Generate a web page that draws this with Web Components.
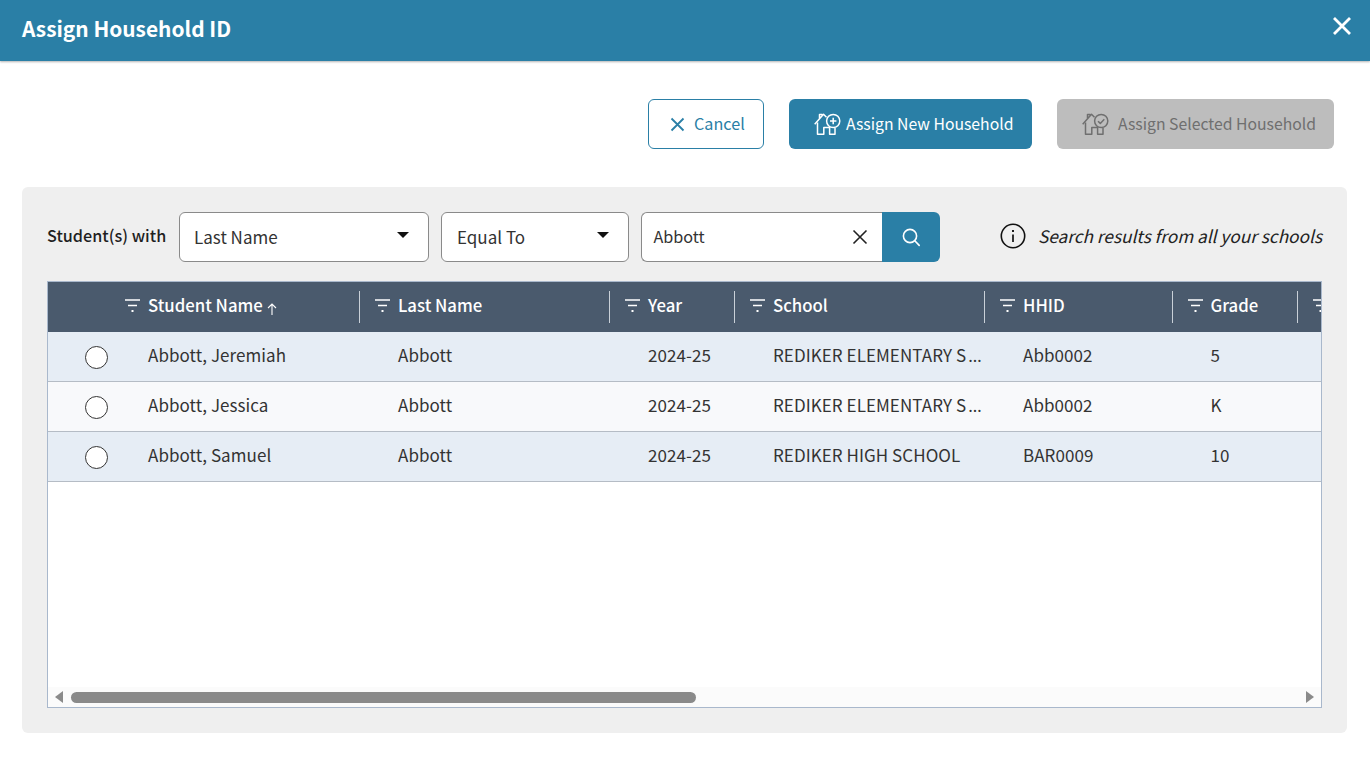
<!DOCTYPE html>
<html><head><meta charset="utf-8">
<style>
html,body{margin:0;height:100%;background:#fff;overflow:hidden}
body{font-family:"Noto Sans CJK SC","Noto Sans CJK JP",sans-serif;font-size:17px;color:#333}
</style></head>
<body>
<hh-dialog></hh-dialog>
<template id="t-dialog">
<style>
:host{display:flex;flex-direction:column;width:1370px;height:757px;box-sizing:border-box}
.actions{display:flex;justify-content:flex-end;gap:25px;padding:38px 36px 38px 0}
.panel{margin:0 23px 0 22px;height:546px;box-sizing:border-box;background:#efefef;border-radius:6px;padding:25px 25px 25px 25px;display:flex;flex-direction:column;gap:19px}
</style>
<hh-header>Assign Household ID</hh-header>
<div class="actions">
<hh-button kind="outline" width="116" icon="x">Cancel</hh-button>
<hh-button kind="primary" width="243" icon="add">Assign New Household</hh-button>
<hh-button kind="disabled" width="277" icon="check">Assign Selected Household</hh-button>
</div>
<div class="panel">
<hh-filter></hh-filter>
<hh-grid></hh-grid>
</div>
</template>

<template id="t-header">
<style>
:host{display:flex;align-items:center;justify-content:space-between;height:61px;flex:none;background:#2a7fa6;color:#fff;box-shadow:0 1px 2px rgba(0,0,0,.3);padding:0 18px 4px 22px;box-sizing:border-box}
h1{margin:0;font-size:20.9px;font-weight:700;line-height:28px;position:relative;top:-1px}
svg{display:block;position:relative;top:-3px}
</style>
<h1><slot></slot></h1>
<svg width="20" height="20" viewBox="0 0 20 20" fill="none" stroke="#fff" stroke-width="2.8"><path d="M2 2l16 16M18 2L2 18"/></svg>
</template>

<template id="t-button">
<style>
:host{display:flex;align-items:center;height:50px;box-sizing:border-box;border-radius:6px;font-size:15.75px;line-height:24px;flex:none;white-space:nowrap}
:host([kind=outline]){background:#fff;border:1px solid #2a7fa6;color:#2a7fa6;padding-left:21px;gap:9px;font-size:16.2px}
:host([kind=primary]){background:#2a7fa6;color:#fff;padding-left:25px;gap:4px}
:host([kind=disabled]){background:#bdbdbd;color:#6f6f6f;padding-left:25px;gap:8px}
svg{display:block;flex:none}
.t{position:relative;top:0}
:host([kind=outline]) .t{top:-1px}
</style>
<span id="ic" style="display:contents"></span><span class="t"><slot></slot></span>
</template>

<template id="t-filter">
<style>
:host{display:flex;align-items:center;height:50px;flex:none}
b{font-weight:500;font-size:16.2px;color:#1f1f1f;margin-right:12px;width:120px;white-space:nowrap;position:relative;top:-2px}
.sel,.search{height:50px;box-sizing:border-box;background:#fff;border:1px solid #8a8a8a;border-radius:6px;display:flex;align-items:center;font-size:17px;color:#333}
.sel span,.search span{position:relative;top:-1px}
.sel{padding:0 19px 0 14px;justify-content:space-between}
.s2{padding-left:15px}
.s1{width:250px;margin-right:12px}.s2{width:188px;margin-right:12px}
.tri{width:0;height:0;border:6px solid transparent;border-top:6px solid #111;border-bottom:0;position:relative;top:-2px}
.search{width:241px;border-radius:6px 0 0 6px;border-right:0;padding:0 14px 0 11.5px;justify-content:space-between;font-size:16.2px}
.go{width:58px;height:50px;background:#2a7fa6;border-radius:0 6px 6px 0;display:flex;align-items:center;justify-content:center}
.note{margin-left:auto;display:flex;align-items:center;gap:12px;font-style:italic;font-size:17.25px;color:#222}
.note span{position:relative;top:-2px}
svg{display:block}
.note svg{position:relative;top:-1px}
</style>
<b>Student(s) with</b>
<div class="sel s1"><span>Last Name</span><i class="tri"></i></div>
<div class="sel s2"><span>Equal To</span><i class="tri"></i></div>
<div class="search"><span>Abbott</span>
<svg width="16" height="16" viewBox="0 0 16 16" fill="none" stroke="#222" stroke-width="1.6"><path d="M1.5 1.5l13 13M14.5 1.5l-13 13"/></svg></div>
<div class="go"><svg width="20" height="20" viewBox="0 0 20 20" fill="none" stroke="#fff" stroke-width="1.6"><circle cx="9" cy="9" r="6.6"/><path d="M13.8 13.8l4.4 4.6" stroke-linecap="round"/></svg></div>
<div class="note">
<svg width="26" height="26" viewBox="0 0 26 26" fill="none" stroke="#111" stroke-width="1.6"><circle cx="13" cy="13" r="11.7"/><path d="M13 11.5v7.5" stroke-width="1.7"/><path d="M13 7v2" stroke-width="1.9"/></svg>
<span>Search results from all your schools</span></div>
</template>

<template id="t-grid">
<style>
:host{display:block;height:427px;box-sizing:border-box;border:1px solid #a9b8cc;background:#fff;position:relative;overflow:hidden;flex:none}
.wrap{overflow:hidden;height:100%}
.row{display:grid;grid-template-columns:62px 250px 250px 125px 250px 187.5px 125.5px 100px;width:1350px;height:50px;box-sizing:border-box;align-items:center}
.head{background:#4a5a6d;color:#fff;font-weight:500;font-size:16.75px;height:50px}
.head>div{height:32px;display:flex;align-items:center;box-sizing:border-box;padding-left:15px;gap:8px;border-right:1px solid #c9d0d8;white-space:nowrap;position:relative}
.head>div:first-child{border-right:0}
.head>div:last-child{border-right:0}
.head span{position:relative;top:-2px}
.fil{position:relative;top:-1px}
.arrow{margin-left:-4px;position:relative;top:1.5px}
.body{border-bottom:1px solid #b5bcc5;font-size:17px;color:#333;letter-spacing:.06px}
.odd{background:#e6edf5}.even{background:#f8f9fb}
.body>div{padding-left:38px;white-space:nowrap;box-sizing:border-box;position:relative;top:-2px}
.dots{font-family:"Noto Sans",sans-serif;margin-left:2px;letter-spacing:1px}
.body>div.r{padding:0;top:1px;display:flex;justify-content:flex-start;overflow:visible}
.radio{width:23px;height:23px;box-sizing:border-box;border:1.4px solid #333;border-radius:50%;background:#fff;margin-left:37px}
.bar{position:absolute;left:0;right:0;bottom:0;height:20px;background:#fbfbfb}
.thumb{position:absolute;left:23px;top:5px;width:625px;height:11px;border-radius:6px;background:#8a8a8a}
.l,.rr{position:absolute;top:4px;width:0;height:0;border:6.5px solid transparent}
.l{left:7px;border-right:8px solid #8a8a8a;border-left:0}
.rr{right:7px;border-left:8px solid #8a8a8a;border-right:0}
svg{display:block;flex:none}
</style>
<div class="wrap" id="w"></div>
<div class="bar"><i class="l"></i><div class="thumb"></div><i class="rr"></i></div>
</template>

<script>
const tpl=id=>document.getElementById(id).content.cloneNode(true);
class Base extends HTMLElement{
  constructor(){super();this.attachShadow({mode:'open'}).appendChild(tpl(this.constructor.tid));}
}
const house=(c,badge)=>`<svg width="28" height="26" viewBox="0 0 28 26" fill="none" stroke="${c}" stroke-width="1.5" stroke-linejoin="round">
<path d="M.7 13.2L9.5 3.3l3 3M5.5 7.8V3.4H8.4"/>
<path d="M3.5 11.5V23.2H9.8V16.5H15.6V23.2H21V17"/>
<circle cx="19.2" cy="10" r="6.6"/>${badge}</svg>`;
const icons={
 x:`<svg width="15" height="15" viewBox="0 0 15 15" fill="none" stroke="#2a7fa6" stroke-width="1.8"><path d="M1.5 1.5l12 12M13.5 1.5l-12 12"/></svg>`,
 add:house('#fff','<path d="M19.2 6.8v6.4M16 10h6.4"/>'),
 check:house('#6f6f6f','<path d="M16 10.2l2.3 2.2 4-4.1"/>')
};
customElements.define('hh-header',class extends Base{static tid='t-header'});
customElements.define('hh-button',class extends Base{static tid='t-button';
 connectedCallback(){this.style.width=this.getAttribute('width')+'px';
  this.shadowRoot.getElementById('ic').innerHTML=icons[this.getAttribute('icon')];}});
customElements.define('hh-filter',class extends Base{static tid='t-filter'});
const fil=`<svg class="fil" width="15" height="14" viewBox="0 0 15 14" fill="none" stroke="#fff" stroke-width="1.4"><path d="M0 1h15M3 6.5h9"/><path d="M6.5 12h2" stroke-width="2"/></svg>`;
const arrow=`<svg class="arrow" width="10" height="12" viewBox="0 0 10 12" fill="none" stroke="#fff" stroke-width="1.1"><path d="M5 12V1M1 5l4-4 4 4"/></svg>`;
const cols=['Student Name','Last Name','Year','School','HHID','Grade',''];
const cut='REDIKER ELEMENTARY S<span class="dots">…</span>';
const data=[
 ['Abbott, Jeremiah','Abbott','2024-25',cut,'Abb0002','5'],
 ['Abbott, Jessica','Abbott','2024-25',cut,'Abb0002','K'],
 ['Abbott, Samuel','Abbott','2024-25','REDIKER HIGH SCHOOL','BAR0009','10']];
customElements.define('hh-grid',class extends Base{static tid='t-grid';
 connectedCallback(){
  let h='<div class="row head"><div></div>'+cols.map((c,i)=>`<div>${fil}${c?`<span>${c}</span>`:''}${i==0?arrow:''}</div>`).join('')+'</div>';
  data.forEach((r,i)=>{h+=`<div class="row body ${i%2?'even':'odd'}"><div class="r"><div class="radio"></div></div>`+r.map(c=>`<div>${c}</div>`).join('')+'<div></div></div>';});
  this.shadowRoot.getElementById('w').innerHTML=h;
 }});
customElements.define('hh-dialog',class extends Base{static tid='t-dialog'});
</script>
</body></html>
